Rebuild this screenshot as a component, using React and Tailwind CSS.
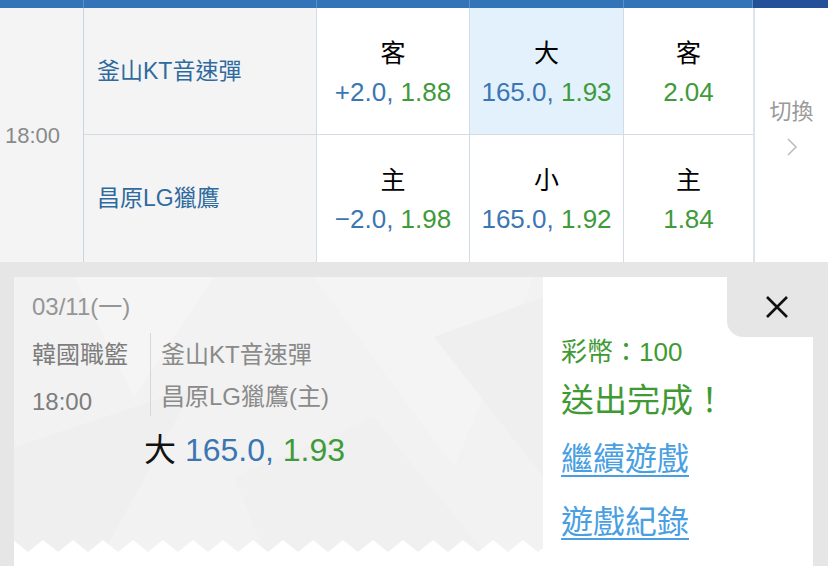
import React from 'react';

// ── Data ─────────────────────────────────────────────────────────────────────

const ROWS = [
  {
    team: '釜山KT音速彈',
    cells: [
      { label: '客', line: '+2.0', odds: '1.88' },
      { label: '大', line: '165.0', odds: '1.93', active: true },
      { label: '客', odds: '2.04' },
    ],
  },
  {
    team: '昌原LG獵鷹',
    cells: [
      { label: '主', line: '−2.0', odds: '1.98' },
      { label: '小', line: '165.0', odds: '1.92' },
      { label: '主', odds: '1.84' },
    ],
  },
];

const FONT = "font-['Liberation_Sans','Noto_Sans_CJK_TC',sans-serif]";

// ── Sub-components ───────────────────────────────────────────────────────────

function OddsCell({ cell, width, last }) {
  return (
    <div
      className={`${width} ${last ? '' : 'border-r border-[#d3dbe4]'} ${
        cell.active ? 'bg-[#e3f1fc]' : 'bg-white'
      } flex flex-col items-center pt-[28px]`}
    >
      <span className="text-[25px] leading-[34px] text-black">{cell.label}</span>
      <span className="text-[26px] leading-[44px]">
        {cell.line && <span className="text-[#3b76b3]">{cell.line}, </span>}
        <span className="text-[#3f9a3c]">{cell.odds}</span>
      </span>
    </div>
  );
}

function Zigzag() {
  return (
    <svg className="absolute left-0 bottom-0" width="529" height="12">
      <defs>
        <pattern id="zz" x="14" y="0" width="30" height="12" patternUnits="userSpaceOnUse">
          <polygon points="0,12 15,0 30,12" fill="#ffffff" />
        </pattern>
      </defs>
      <rect width="529" height="12" fill="url(#zz)" />
    </svg>
  );
}

function Facets() {
  // faint low-poly backdrop
  return (
    <svg className="absolute inset-0" width="529" height="275">
      <polygon points="60,0 200,0 120,120" fill="#f5f5f5" />
      <polygon points="300,0 520,0 440,190" fill="#f4f4f4" />
      <polygon points="0,170 180,110 90,275 0,275" fill="#efefef" />
      <polygon points="220,200 360,140 470,275 250,275" fill="#f0f0f0" />
      <polygon points="420,60 529,20 529,200" fill="#efefef" />
    </svg>
  );
}

// ── Main ─────────────────────────────────────────────────────────────────────

export default function App() {
  return (
    <div className={`w-[828px] h-[566px] overflow-hidden bg-[#e6e6e6] ${FONT}`}>
      {/* Header bar */}
      <div className="flex h-[8px]">
        <div className="w-[84px] bg-[#3274b7] border-r border-[#5b90c7]" />
        <div className="w-[233px] bg-[#3274b7] border-r border-[#5b90c7]" />
        <div className="w-[153px] bg-[#3274b7] border-r border-[#5b90c7]" />
        <div className="w-[154px] bg-[#3274b7] border-r border-[#5b90c7]" />
        <div className="w-[129px] bg-[#3274b7] border-r border-[#5b90c7]" />
        <div className="flex-1 bg-[#24509a]" />
      </div>

      {/* Match table */}
      <div className="flex h-[254px]">
        <div className="w-[84px] bg-[#f4f4f5] border-r border-[#c9d5e2] flex items-center pl-[5px]">
          <span className="text-[22px] text-[#8a8a8a]">18:00</span>
        </div>

        <div className="w-[669px] flex flex-col">
          {ROWS.map((row, i) => (
            <div
              key={row.team}
              className={`flex h-[127px] ${i === 0 ? 'border-b border-[#d3dbe4]' : ''}`}
            >
              <div className="w-[233px] bg-[#f4f4f5] border-r border-[#d3dbe4] flex items-center pl-[13px]">
                <span className="text-[23px] text-[#2f6a9e]">{row.team}</span>
              </div>
              <OddsCell cell={row.cells[0]} width="w-[153px]" />
              <OddsCell cell={row.cells[1]} width="w-[154px]" />
              <OddsCell cell={row.cells[2]} width="w-[129px]" last />
            </div>
          ))}
        </div>

        <div className="flex-1 bg-white border-l-2 border-[#dde3ea] flex flex-col items-center pt-[89px]">
          <span className="text-[22px] leading-[30px] text-[#9a9a9a]">切換</span>
          <svg className="mt-[10px]" width="12" height="20" viewBox="0 0 12 20">
            <path d="M2 2 L10 10 L2 18" fill="none" stroke="#bdbdbd" strokeWidth="1.6" />
          </svg>
        </div>
      </div>

      {/* Bet receipt */}
      <div className="relative flex mt-[15px] ml-[14px] h-[300px]">
        <div className="w-[529px] flex flex-col bg-white">
          <div className="relative h-[275px] bg-[#f2f2f2] pl-[18px] pt-[15px]">
            <Facets />
            <Zigzag />
            <div className="relative">
              <div className="text-[24px] leading-[30px] text-[#959595]">03/11(一)</div>

              <div className="flex mt-[11px]">
                <div className="w-[118px] flex flex-col text-[#7d7d7d]">
                  <span className="text-[24px] leading-[44px]">韓國職籃</span>
                  <span className="text-[24px] leading-[50px]">18:00</span>
                </div>
                <div className="w-px h-[83px] bg-[#d6d6d6]" />
                <div className="flex flex-col pl-[10px] text-[#8a8a8a]">
                  <span className="text-[24px] leading-[44px]">釜山KT音速彈</span>
                  <span className="text-[24px] leading-[40px]">昌原LG獵鷹(主)</span>
                </div>
              </div>

              <div className="ml-[112px] mt-[3px] text-[32px] leading-[40px]">
                <span className="text-[#111]">大 </span>
                <span className="text-[#3b76b3]">165.0, </span>
                <span className="text-[#3f9a3c]">1.93</span>
              </div>
            </div>
          </div>
        </div>

        <div className="w-[270px] bg-white flex flex-col pl-[18px] pt-[58px]">
          <span className="text-[26px] leading-[34px] text-[#3f9a34]">彩幣：100</span>
          <span className="mt-[10px] text-[33px] leading-[44px] text-[#3f9a34]">送出完成！</span>
          <a className="mt-[14px] self-start text-[32px] leading-[44px] text-[#4a9fe2] underline underline-offset-[5px] decoration-[2px]">
            繼續遊戲
          </a>
          <a className="mt-[19px] self-start text-[32px] leading-[44px] text-[#4a9fe2] underline underline-offset-[5px] decoration-[2px]">
            遊戲紀錄
          </a>
        </div>

        {/* Close tab */}
        <div className="absolute top-0 right-0 w-[101px] h-[60px] bg-[#e6e6e6] rounded-bl-[16px] flex items-center justify-center pr-[1px]">
          <svg width="24" height="24" viewBox="0 0 24 24">
            <path d="M2 2 L22 22 M22 2 L2 22" stroke="#111" strokeWidth="2.6" />
          </svg>
        </div>
      </div>
    </div>
  );
}
